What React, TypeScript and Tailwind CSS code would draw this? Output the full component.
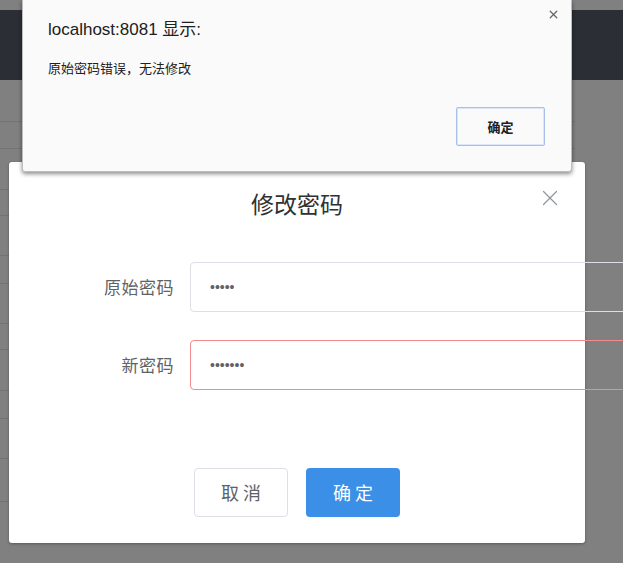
import { X } from 'lucide-react';

const ROW_LINES = [121, 148, 189, 215, 255, 283, 323, 349, 390, 418, 458, 501];

export default function App() {
  return (
    <div className="relative w-[623px] h-[563px] overflow-hidden bg-[#808080] font-['Noto_Sans_CJK_SC',sans-serif]">
      {/* page under the overlay */}
      <div className="h-[10px]" />
      <div className="h-[70px] bg-[#2b2f35]" />
      {ROW_LINES.map((y) => (
        <div key={y} className="absolute left-0 w-[575px] h-px bg-[#737373]" style={{ top: y }} />
      ))}

      {/* dialog */}
      <div className="absolute left-[9px] top-[162px] w-[576px] h-[381px] bg-white rounded-[3px] shadow-[0_1px_3px_rgba(0,0,0,0.3)]">
        <div className="relative pt-[25px] text-center text-[23px] leading-[32px] text-[#303133]">
          修改密码
          <button className="absolute right-[22px] top-[23px] text-[#909399]">
            <X className="w-[26px] h-[26px]" strokeWidth={1.1} />
          </button>
        </div>
        <div className="mt-[43px] flex flex-col gap-[28px]">
          <div className="flex items-center">
            <label className="w-[165px] shrink-0 text-right text-[17px] tracking-[0.5px] text-[#606266]">原始密码</label>
            <input
              type="text"
              readOnly
              defaultValue="•••••"
              className="ml-[16px] shrink-0 w-[480px] h-[50px] px-[19px] border border-[#dcdfe6] rounded-[4px] text-[14px] font-['Liberation_Sans',sans-serif] text-[#606266] outline-none"
            />
          </div>
          <div className="flex items-center">
            <label className="w-[165px] shrink-0 text-right text-[17px] tracking-[0.5px] text-[#606266]">新密码</label>
            <input
              type="text"
              readOnly
              defaultValue="•••••••"
              className="ml-[16px] shrink-0 w-[480px] h-[50px] px-[19px] border border-[#f28b8b] rounded-[4px] text-[14px] font-['Liberation_Sans',sans-serif] text-[#606266] outline-none"
            />
          </div>
        </div>
        <div className="mt-[78px] flex justify-center gap-[18px]">
          <button className="w-[94px] h-[49px] border border-[#dcdfe6] rounded-[4px] bg-white text-[18px] tracking-[4px] pl-[4px] text-[#606266]">
            取消
          </button>
          <button className="w-[94px] h-[49px] rounded-[4px] bg-[#3c8fe6] text-[18px] tracking-[4px] pl-[4px] text-white">
            确定
          </button>
        </div>
      </div>

      {/* browser alert */}
      <div className="absolute left-[22px] top-0 w-[550px] h-[172px] bg-[#fafafa] rounded-b-[3px] shadow-[0_2px_4px_rgba(0,0,0,0.45)] border border-t-0 border-[#bdbdbd]">
        <div className="pt-[18px] pl-[25px] text-[17px] leading-[24px] text-[#202020] font-['Liberation_Sans','Noto_Sans_CJK_SC',sans-serif]">
          localhost:8081 显示:
        </div>
        <div className="mt-[17px] pl-[25px] text-[13px] leading-[18px] text-[#202020]">原始密码错误，无法修改</div>
        <button className="absolute right-[11px] top-[8px] text-[#666]">
          <X className="w-[13px] h-[13px]" strokeWidth={2.4} />
        </button>
        <button className="absolute left-[433px] top-[107px] w-[89px] h-[39px] bg-[#fafafa] border border-[#a7bfea] rounded-[2px] text-[13px] font-bold text-[#202020] shadow-[inset_0_0_0_1px_#dbe6f8]">
          确定
        </button>
      </div>
    </div>
  );
}
